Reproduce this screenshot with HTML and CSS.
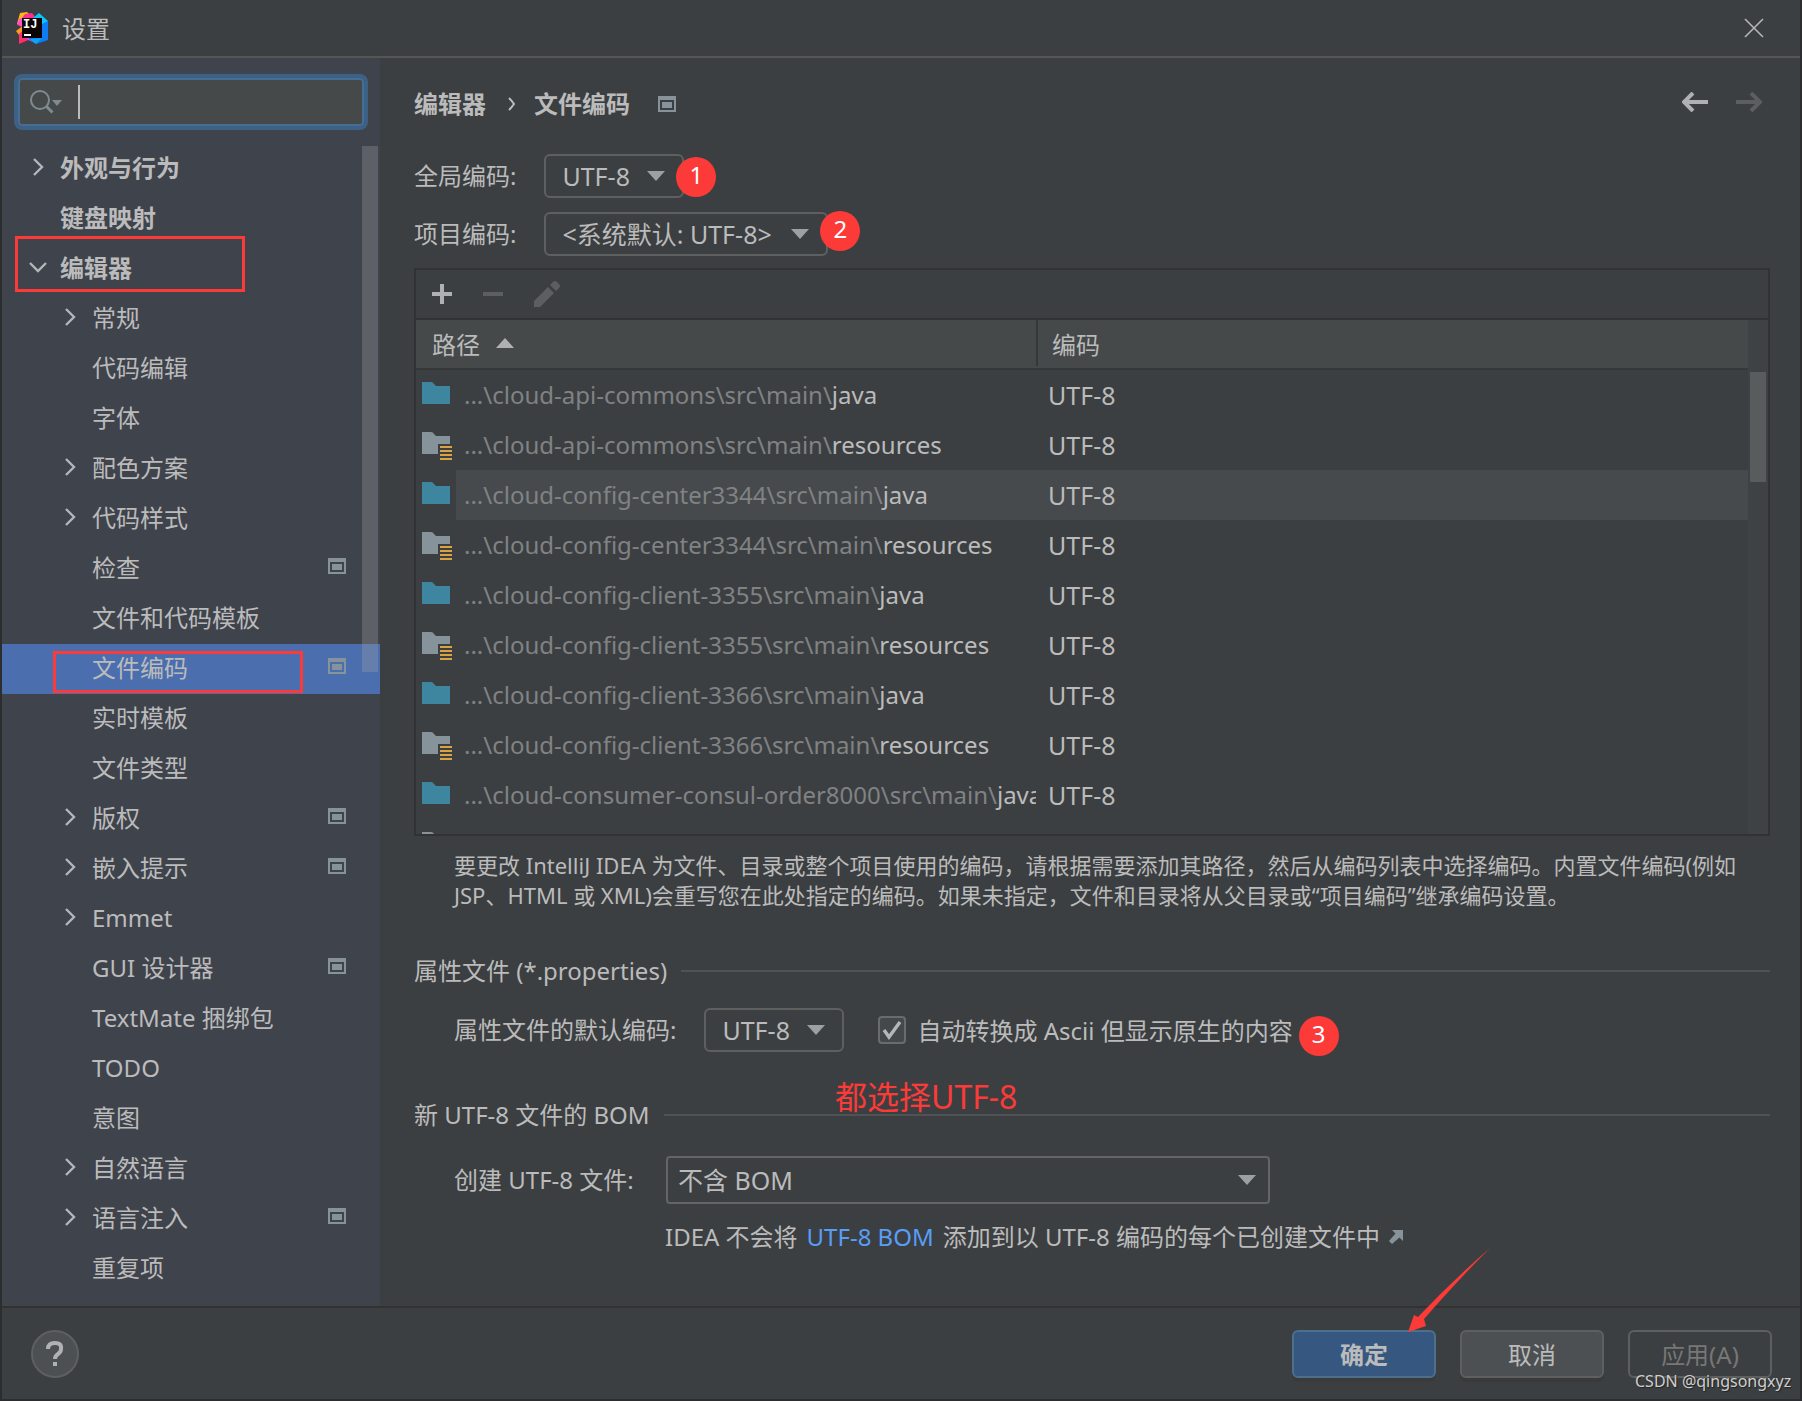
FILE: index.html
```html
<!DOCTYPE html>
<html lang="zh-CN">
<head>
<meta charset="utf-8">
<title>设置</title>
<link rel="stylesheet" href="styles.css">
</head>
<body>
<svg class="defs" aria-hidden="true">
  <symbol id="chevron-right" viewBox="0 0 20 20"><path d="M6 2l8 8-8 8" fill="none" stroke="#b4b6b8" stroke-width="2.4"/></symbol>
  <symbol id="chevron-down" viewBox="0 0 20 20"><path d="M2 6l8 8 8-8" fill="none" stroke="#b4b6b8" stroke-width="2.4"/></symbol>
  <symbol id="module" viewBox="0 0 18 16"><path fill="#87939a" fill-rule="evenodd" d="M0 0h18v16H0zM2 4v10h14V4zM4 6h10v6H4z"/></symbol>
  <symbol id="arrow-drop" viewBox="0 0 18 10"><path fill="#9da0a3" d="M0 0h18l-9 10z"/></symbol>
  <symbol id="folder-java" viewBox="0 0 30 28"><path fill="#3e86a0" d="M0 0h9q2 0 3 2l2 2h14v18H0z"/></symbol>
  <symbol id="folder-res" viewBox="0 0 30 28"><path fill="#87939a" d="M0 0h9q2 0 3 2l2 2h14v8H16v10H0z"/><path fill="#d9a343" d="M18 14h12v2H18zm0 4h12v2H18zm0 4h12v2H18zm0 4h12v2H18z"/></symbol>
</svg>

<div class="window">
  <header class="titlebar">
    <svg class="logo" viewBox="0 0 32 32" aria-hidden="true">
      <path fill="#fdb60d" d="M4 1l7-1 5 5-9 9-6-2z"/>
      <path fill="#ff2d90" d="M9 2l7-1 4 5-4 8-8 2-7-3z"/>
      <path fill="#ff4fd0" d="M4 6l5 3-1 6-7-3z"/>
      <path fill="#ff9a1a" d="M0 19l8-6v9l-5 1z"/>
      <path fill="#fc2f6c" d="M3 22l6-5 10 8-9 4-7 3z"/>
      <path fill="#c04bf0" d="M10 27l6-4 6 4-3 4z"/>
      <path fill="#08c8fa" d="M17 6l6-5 9 8-4 5-10-2z"/>
      <path fill="#0d7cf5" d="M26 12l6-3v19l-12 4-7-5z"/>
      <path fill="#0aa6f8" d="M20 32l-6-5 12-1z"/>
      <rect x="6" y="6" width="20" height="20" fill="#0b0306"/>
      <path fill="#fff" d="M8 22h7v2H8z"/>
      <text x="7" y="16" class="logo-text">IJ</text>
    </svg>
    <h1 class="title">设置</h1>
    <button class="icon-button" type="button" aria-label="关闭">
      <svg width="20" height="20" viewBox="0 0 20 20"><path d="M1 1l18 18M19 1L1 19" stroke="#b4b6b8" stroke-width="1.6"/></svg>
    </button>
  </header>

  <div class="body">
    <aside class="sidebar">
      <div class="search">
        <svg width="34" height="26" viewBox="0 0 34 26" aria-hidden="true"><circle cx="12" cy="11" r="9" fill="none" stroke="#7f8b91" stroke-width="2"/><path d="M18 17l6.500 6.500" stroke="#7f8b91" stroke-width="3"/><path fill="#7f8b91" d="M24 11h10l-5 6z"/></svg>
        <span class="caret"></span>
        <input class="search-input" type="text" aria-label="搜索设置">
      </div>
      <div class="tree-area">
      <ul class="tree">
        <li><a class="node top" href="#"><svg class="chev"><use href="#chevron-right"/></svg><span class="name">外观与行为</span></a></li>
        <li><a class="node top" href="#"><span class="chev"></span><span class="name">键盘映射</span></a></li>
        <li><a class="node top" href="#"><svg class="chev"><use href="#chevron-down"/></svg><span class="name">编辑器</span><span class="mark mark-editor"></span></a></li>
        <li><a class="node" href="#"><svg class="chev"><use href="#chevron-right"/></svg><span class="name">常规</span></a></li>
        <li><a class="node" href="#"><span class="chev"></span><span class="name">代码编辑</span></a></li>
        <li><a class="node" href="#"><span class="chev"></span><span class="name">字体</span></a></li>
        <li><a class="node" href="#"><svg class="chev"><use href="#chevron-right"/></svg><span class="name">配色方案</span></a></li>
        <li><a class="node" href="#"><svg class="chev"><use href="#chevron-right"/></svg><span class="name">代码样式</span></a></li>
        <li><a class="node" href="#"><span class="chev"></span><span class="name">检查</span><svg class="module"><use href="#module"/></svg></a></li>
        <li><a class="node" href="#"><span class="chev"></span><span class="name">文件和代码模板</span></a></li>
        <li><a class="node selected" href="#"><span class="chev"></span><span class="name">文件编码</span><svg class="module"><use href="#module"/></svg><span class="mark mark-encoding"></span></a></li>
        <li><a class="node" href="#"><span class="chev"></span><span class="name">实时模板</span></a></li>
        <li><a class="node" href="#"><span class="chev"></span><span class="name">文件类型</span></a></li>
        <li><a class="node" href="#"><svg class="chev"><use href="#chevron-right"/></svg><span class="name">版权</span><svg class="module"><use href="#module"/></svg></a></li>
        <li><a class="node" href="#"><svg class="chev"><use href="#chevron-right"/></svg><span class="name">嵌入提示</span><svg class="module"><use href="#module"/></svg></a></li>
        <li><a class="node" href="#"><svg class="chev"><use href="#chevron-right"/></svg><span class="name">Emmet</span></a></li>
        <li><a class="node" href="#"><span class="chev"></span><span class="name">GUI 设计器</span><svg class="module"><use href="#module"/></svg></a></li>
        <li><a class="node" href="#"><span class="chev"></span><span class="name">TextMate 捆绑包</span></a></li>
        <li><a class="node" href="#"><span class="chev"></span><span class="name">TODO</span></a></li>
        <li><a class="node" href="#"><span class="chev"></span><span class="name">意图</span></a></li>
        <li><a class="node" href="#"><svg class="chev"><use href="#chevron-right"/></svg><span class="name">自然语言</span></a></li>
        <li><a class="node" href="#"><svg class="chev"><use href="#chevron-right"/></svg><span class="name">语言注入</span><svg class="module"><use href="#module"/></svg></a></li>
        <li><a class="node" href="#"><span class="chev"></span><span class="name">重复项</span></a></li>
      </ul>
      <span class="tree-thumb"></span>
      </div>
    </aside>

    <main class="content">
      <div class="crumbs">
        <span>编辑器</span>
        <svg width="8" height="14" viewBox="0 0 8 14" aria-hidden="true"><path d="M1 1q3 3 5 6-2 3-5 6" fill="none" stroke="#bbb" stroke-width="2"/></svg>
        <span>文件编码</span>
        <svg class="module"><use href="#module"/></svg>
        <div class="history">
          <button class="icon-button" type="button" aria-label="后退"><svg width="26" height="20" viewBox="0 0 26 20"><path d="M26 10H3M11 1L2 10l9 9" fill="none" stroke="#afb1b3" stroke-width="4"/></svg></button>
          <button class="icon-button" type="button" aria-label="前进" disabled><svg width="26" height="20" viewBox="0 0 26 20"><path d="M0 10h23M15 1l9 9-9 9" fill="none" stroke="#5c5e5f" stroke-width="4"/></svg></button>
        </div>
      </div>

      <div class="field">
        <label class="field-label" for="global">全局编码:</label>
        <div class="combo small"><select id="global"><option>UTF-8</option></select><svg class="drop"><use href="#arrow-drop"/></svg><span class="badge">1</span></div>
      </div>
      <div class="field">
        <label class="field-label" for="project">项目编码:</label>
        <div class="combo medium"><select id="project"><option>&lt;系统默认: UTF-8&gt;</option></select><svg class="drop"><use href="#arrow-drop"/></svg><span class="badge badge-raised">2</span></div>
      </div>

      <section class="panel">
        <div class="toolbar">
          <button class="icon-button" type="button" aria-label="添加"><svg width="20" height="20" viewBox="0 0 20 20"><path fill="#afb1b3" d="M8 0h4v8h8v4h-8v8H8v-8H0V8h8z"/></svg></button>
          <button class="icon-button" type="button" aria-label="移除" disabled><svg width="20" height="20" viewBox="0 0 20 20"><path fill="#5c5e5f" d="M0 8h20v4H0z"/></svg></button>
          <button class="icon-button" type="button" aria-label="编辑" disabled><svg width="26" height="26" viewBox="0 0 26 26"><path fill="#5c5e5f" d="M0 20L14 6l6 6L6 26H0zM16 4l3-3q2-2 4 0l2 2q2 2 0 4l-3 3z"/></svg></button>
        </div>
        <div class="grid-area">
          <table class="paths">
            <thead><tr><th class="col-path" scope="col"><span class="head-cell">路径 <svg width="18" height="10" viewBox="0 0 18 10"><path fill="#afb1b3" d="M0 10h18L9 0z"/></svg></span></th><th scope="col"><span class="head-cell second">编码</span></th></tr></thead>
            <tbody>
              <tr><td><div class="path"><svg class="folder"><use href="#folder-java"/></svg><span class="path-text">...\cloud-api-commons\src\main\<b>java</b></span></div></td><td>UTF-8</td></tr>
              <tr><td><div class="path"><svg class="folder"><use href="#folder-res"/></svg><span class="path-text">...\cloud-api-commons\src\main\<b>resources</b></span></div></td><td>UTF-8</td></tr>
              <tr class="hovered"><td><div class="path"><svg class="folder"><use href="#folder-java"/></svg><span class="path-text">...\cloud-config-center3344\src\main\<b>java</b></span></div></td><td>UTF-8</td></tr>
              <tr><td><div class="path"><svg class="folder"><use href="#folder-res"/></svg><span class="path-text">...\cloud-config-center3344\src\main\<b>resources</b></span></div></td><td>UTF-8</td></tr>
              <tr><td><div class="path"><svg class="folder"><use href="#folder-java"/></svg><span class="path-text">...\cloud-config-client-3355\src\main\<b>java</b></span></div></td><td>UTF-8</td></tr>
              <tr><td><div class="path"><svg class="folder"><use href="#folder-res"/></svg><span class="path-text">...\cloud-config-client-3355\src\main\<b>resources</b></span></div></td><td>UTF-8</td></tr>
              <tr><td><div class="path"><svg class="folder"><use href="#folder-java"/></svg><span class="path-text">...\cloud-config-client-3366\src\main\<b>java</b></span></div></td><td>UTF-8</td></tr>
              <tr><td><div class="path"><svg class="folder"><use href="#folder-res"/></svg><span class="path-text">...\cloud-config-client-3366\src\main\<b>resources</b></span></div></td><td>UTF-8</td></tr>
              <tr><td><div class="path"><svg class="folder"><use href="#folder-java"/></svg><span class="path-text">...\cloud-consumer-consul-order8000\src\main\<b>java</b></span></div></td><td>UTF-8</td></tr>
              <tr><td><div class="path"><svg class="folder"><use href="#folder-res"/></svg></div></td><td></td></tr>
            </tbody>
          </table>
          <div class="scrollbar"><div class="thumb"></div></div>
        </div>
      </section>
      <p class="note">要更改 IntelliJ IDEA 为文件、目录或整个项目使用的编码，请根据需要添加其路径，然后从编码列表中选择编码。内置文件编码(例如 JSP、HTML 或 XML)会重写您在此处指定的编码。如果未指定，文件和目录将从父目录或“项目编码”继承编码设置。</p>

      <h2 class="group">属性文件 (*.properties)</h2>
      <div class="field indented">
        <label class="field-label" for="props">属性文件的默认编码:</label>
        <div class="combo small"><select id="props"><option>UTF-8</option></select><svg class="drop"><use href="#arrow-drop"/></svg></div>
        <label class="check"><input type="checkbox" checked><span class="check-text">自动转换成 Ascii 但显示原生的内容</span><span class="badge badge-check">3</span></label>
      </div>

      <h2 class="group group-bom">新 UTF-8 文件的 BOM<span class="remark">都选择UTF-8</span></h2>
      <div class="field indented">
        <label class="field-label bom-label" for="bom">创建 UTF-8 文件:</label>
        <div class="combo wide"><select id="bom"><option>不含 BOM</option></select><svg class="drop"><use href="#arrow-drop"/></svg></div>
      </div>
      <p class="hint">IDEA 不会将 <a href="#">UTF-8 BOM</a> 添加到以 UTF-8 编码的每个已创建文件中 <svg width="14" height="14" viewBox="0 0 14 14" aria-hidden="true"><path fill="#87939a" d="M3 0h11v11l-3.500-3.500L3 14 0 11l6.500-7.500z"/></svg></p>
    </main>
  </div>

  <footer class="footer">
    <button class="help" type="button" aria-label="帮助"><svg width="18" height="26" viewBox="0 0 18 26"><path d="M2 8q0-6 7-6t6 6q0 3-3 5t-3 5" fill="none" stroke="#afb1b3" stroke-width="4"/><path fill="#afb1b3" d="M7 21h4v4H7z"/></svg></button>
    <button class="action primary" type="button">确定<svg class="pointer" width="82" height="84" viewBox="0 0 82 84" aria-hidden="true"><path fill="#fc3a38" d="M82 0Q52 30 16 71l2 7L0 84 6 67l4 2Q44 33 82 0z"/></svg></button>
    <button class="action" type="button">取消</button>
    <button class="action apply" type="button" disabled>应用(A)<span class="watermark">CSDN @qingsongxyz</span></button>
  </footer>
</div>
</body>
</html>
```
FILE: styles.css
```css
* { box-sizing: border-box; }

body {
  margin: 0;
  background: #3c3f41;
  color: #bbbbbb;
  font: 24px/32px "Noto Sans", "Noto Sans CJK SC", sans-serif;
}

button, input, select { font: inherit; color: inherit; margin: 0; }
ul, h1, h2, p { margin: 0; padding: 0; list-style: none; font-size: inherit; font-weight: 400; }
svg { display: block; flex: none; }
.defs { position: absolute; width: 0; height: 0; }

.window {
  display: flex;
  flex-direction: column;
  min-height: 100vh;
  border: solid #2b2d2f;
  border-width: 0 2px 2px;
}

.icon-button { display: flex; padding: 0; border: 0; background: none; }

/* Title bar */
.titlebar {
  display: flex;
  align-items: center;
  height: 58px;
  padding: 0 36px 0 14px;
  border-bottom: 2px solid #555555;
}
.logo { width: 32px; height: 32px; }
.logo-text { font: bold 12px "Liberation Mono", monospace; fill: #ffffff; }
.title { flex: 1; padding: 2px 0 0 14px; }

.body { display: flex; flex: 1; }

/* Sidebar */
.sidebar { width: 378px; flex: none; padding-top: 16px; background: #3f434c; }
.search {
  display: flex;
  align-items: center;
  height: 56px;
  margin: 0 12px;
  padding-left: 10px;
  border: 4px solid #3d6185;
  border-radius: 8px;
  background: #45494a;
  box-shadow: inset 0 0 0 2px #466d94;
}
.caret { width: 2px; height: 34px; margin-left: 16px; background: #bbbbbb; }
.search-input { flex: 1; min-width: 0; padding: 0; border: 0; outline: 0; background: none; }

.tree-area { position: relative; padding-top: 14px; }
.node {
  position: relative;
  display: flex;
  align-items: center;
  height: 50px;
  padding: 0 34px 4px 58px;
  color: inherit;
  text-decoration: none;
}
.node.top { padding-left: 26px; font-weight: 700; }
.node.selected { background: #4b6eaf; }
.chev { width: 20px; height: 20px; margin-right: 12px; }
.name { flex: 1; padding-top: 2px; }
.module { width: 18px; height: 16px; }
.node .module { margin-bottom: 2px; }
.tree-thumb {
  position: absolute;
  top: 16px;
  right: 2px;
  width: 16px;
  height: 526px;
  background: rgba(166, 166, 166, 0.3);
}

/* Red annotations */
.mark { position: absolute; border: 3px solid #fc3a38; }
.mark-editor { left: 13px; top: -8px; width: 230px; height: 56px; }
.mark-encoding { left: 51px; top: 7px; width: 250px; height: 42px; }
.badge {
  position: absolute;
  left: calc(100% - 8px);
  top: 3px;
  width: 40px;
  height: 40px;
  border-radius: 50%;
  background: #fc3a38;
  color: #ffffff;
  line-height: 36px;
  text-align: center;
}
.badge-raised { top: -1px; }
.badge-check { left: calc(100% + 6px); top: 6px; }
.remark {
  position: absolute;
  left: 421px;
  top: -18px;
  color: #fc3a38;
  font-size: 32px;
}

/* Content */
.content { flex: 1; min-width: 0; padding: 30px 30px 30px 34px; }
.crumbs {
  display: flex;
  align-items: center;
  height: 32px;
  margin-bottom: 34px;
  font-weight: 700;
}
.crumbs > svg { margin: 0 18px 0 22px; }
.crumbs > .module { margin: 0 0 0 28px; }
.history { display: flex; gap: 28px; margin-left: auto; padding: 0 8px 4px 0; }

.field { display: flex; align-items: center; gap: 28px; margin-bottom: 14px; }
.field-label { min-width: 102px; }
.indented { padding-left: 40px; }
.bom-label { min-width: 184px; }

.combo { position: relative; display: grid; align-items: center; }
.combo > select, .combo > .drop { grid-area: 1 / 1; }
.combo select {
  width: 100%;
  height: 44px;
  padding: 0 16px;
  border: 2px solid #5e6060;
  border-radius: 6px;
  outline: 0;
  background: #3c3f41;
  font-size: 25px;
  appearance: none;
}
.drop { justify-self: end; width: 18px; height: 10px; margin-right: 19px; pointer-events: none; }
.small { width: 140px; }
.medium { width: 284px; }
.wide { width: 604px; }
.combo.wide select { height: 48px; padding: 0 10px; border-color: #646464; border-radius: 4px; }
.wide .drop { margin-right: 14px; }

/* Encoding table */
.panel { border: 2px solid #323232; margin-top: -2px; }
.toolbar {
  display: flex;
  align-items: center;
  gap: 31px;
  height: 50px;
  padding: 0 16px;
  border-bottom: 2px solid #323232;
}
.grid-area { display: flex; height: 514px; overflow: hidden; }
.paths { flex: 1; min-width: 0; table-layout: fixed; border-spacing: 0; }
.paths th, .paths td { padding: 0; text-align: left; font-weight: 400; }
.paths th { height: 50px; border-bottom: 2px solid #353739; background: #45494a; }
.col-path { width: 622px; }
.head-cell { display: flex; align-items: center; gap: 16px; height: 46px; margin-bottom: 2px; padding: 3px 0 0 16px; border-right: 2px solid #353739; }
.head-cell svg { margin-bottom: 3px; }
.head-cell.second { padding-left: 14px; border: 0; }
.paths td { height: 50px; padding-left: 10px; font-size: 25px; }
.paths td:first-child { padding: 0; font-size: 24px; }
.path { display: flex; align-items: center; height: 50px; padding-left: 6px; width: 620px; overflow: hidden; }
.folder { width: 30px; height: 28px; margin: 2px 4px 0 0; }
.path-text { flex: none; min-width: 582px; padding-left: 8px; line-height: 50px; color: #808284; white-space: nowrap; }
.path-text b { color: #bbbbbb; font-weight: 400; }
.hovered td:last-child, .hovered .path-text { background: #464a4c; }
.hovered td:first-child { background: linear-gradient(90deg, #3c3f41 40px, #464a4c 40px); }
.scrollbar { flex: none; width: 20px; padding: 52px 2px 0; background: #3f4244; }
.thumb { height: 110px; background: #595c5d; }

.note { padding: 14px 0 2px 40px; font-size: 22px; line-height: 30px; }

.group {
  position: relative;
  display: flex;
  align-items: center;
  gap: 14px;
  margin: 43px 0 21px;
}
.group::after { content: ""; flex: 1; height: 2px; background: #505354; }
.group-bom { margin: 47px 0 25px; }
.check { position: relative; display: flex; align-items: center; gap: 11px; margin-left: 6px; height: 40px; }
.check-text { padding-top: 2px; }
.check input {
  width: 28px;
  height: 28px;
  appearance: none;
  border: 2px solid #6b6b6b;
  border-radius: 4px;
  background: #43494a url("data:image/svg+xml,%3Csvg xmlns='http://www.w3.org/2000/svg' viewBox='0 0 24 24'%3E%3Cpath d='M4 12l5 7L20 4' fill='none' stroke='%23b4b6b8' stroke-width='3.4'/%3E%3C/svg%3E") center / 24px 24px no-repeat;
}
.hint { display: flex; align-items: center; gap: 9px; padding-left: 251px; margin-top: 17px; }
.hint a { color: #589df6; text-decoration: none; }

/* Footer */
.footer {
  display: flex;
  gap: 24px;
  height: 93px;
  padding: 22px 28px 0;
  border-top: 2px solid #323232;
}
.help {
  display: grid;
  place-items: center;
  width: 48px;
  height: 48px;
  margin: 0 auto 0 1px;
  padding: 0;
  border: 2px solid #5e6060;
  border-radius: 50%;
  background: #4c5052;
}
.action {
  position: relative;
  width: 144px;
  height: 48px;
  padding: 2px 0 0;
  border: 2px solid #5e6060;
  border-radius: 6px;
  background: #4c5052;
  box-shadow: 0 4px 0 #383a3c;
}
.primary { border-color: #4c708c; background: #365880; font-weight: 700; }
.apply { background: none; box-shadow: none; color: #777777; }
.pointer { position: absolute; left: 114px; top: -84px; }
.watermark {
  position: absolute;
  left: 5px;
  top: 38px;
  color: #cfcfcf;
  font-size: 16px;
  line-height: 22px;
  white-space: nowrap;
  text-shadow: 1px 1px 1px #222222;
}
```
